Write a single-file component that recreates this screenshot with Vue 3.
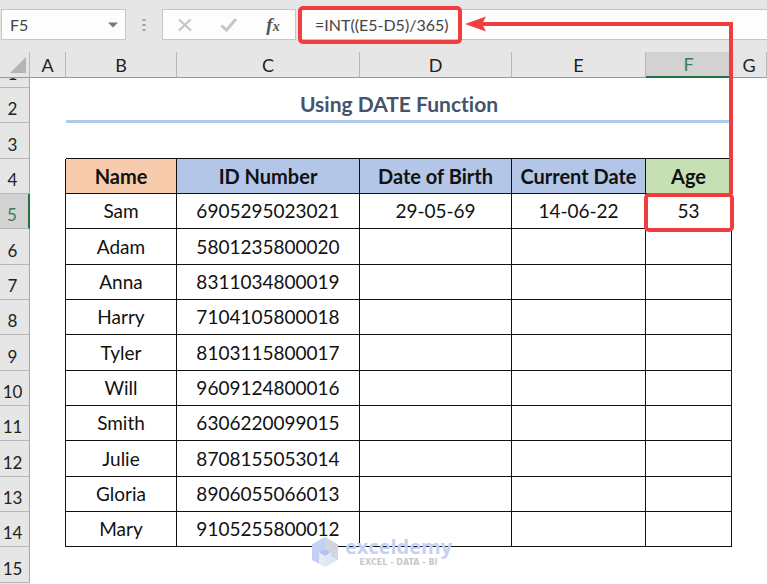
<template>
  <div class="excel">
    <div class="formula-bar">
      <div class="name-box">
        <input type="text" v-model="cellName" aria-label="Name box" />
        <button type="button" aria-label="Open name list">
          <svg width="10" height="6" viewBox="0 0 10 6"><path d="M0 0.5h10L5 5.5z" fill="#777" /></svg>
        </button>
      </div>
      <svg class="dots" width="4" height="14" viewBox="0 0 4 14">
        <path d="M0.5 1h3v2h-3zM0.5 6h3v2h-3zM0.5 11h3v2h-3z" fill="#a3a3a3" />
      </svg>
      <div class="tools">
        <button type="button" aria-label="Cancel">
          <svg width="16" height="16" viewBox="0 0 16 16">
            <path d="M2 2.5L14 13.5M13.5 2.5L2 13.5" stroke="#c6c6c6" stroke-width="2.2" fill="none" />
          </svg>
        </button>
        <button type="button" aria-label="Enter">
          <svg width="18" height="16" viewBox="0 0 18 16">
            <path d="M1.5 8.5L6.5 13L16 2" stroke="#c6c6c6" stroke-width="3" fill="none" />
          </svg>
        </button>
        <button type="button" class="fx" aria-label="Insert function">
          <span>f<sub>x</sub></span>
        </button>
      </div>
      <div class="formula">
        <input type="text" v-model="formula" aria-label="Formula" />
        <div class="formula-mark"></div>
        <div class="arrow-line"></div>
        <svg class="arrow-head" width="22" height="16" viewBox="0 0 22 16">
          <path d="M0 8L21 0.5L17 8L21 15.5z" fill="#f23d3f" />
        </svg>
      </div>
    </div>

    <table class="sheet">
      <colgroup>
        <col class="col-num" />
        <col v-for="c in columns" :key="c" :class="'col-' + c" />
      </colgroup>
      <thead>
        <tr>
          <th class="corner">
            <svg width="16" height="16" viewBox="0 0 16 16"><path d="M16 0v16H0z" fill="#b5b5b5" /></svg>
          </th>
          <th v-for="c in columns" :key="c" :class="{ active: c === 'F' }">{{ c }}</th>
        </tr>
      </thead>
      <tbody>
        <tr class="row-cut">
          <th><div class="cut"><span>1</span></div></th>
          <td colspan="7"></td>
        </tr>
        <tr>
          <th>2</th>
          <td></td>
          <td class="title" colspan="5">Using DATE Function</td>
          <td></td>
        </tr>
        <tr>
          <th>3</th>
          <td></td>
          <td v-for="n in 5" :key="n" class="top-line"></td>
          <td></td>
        </tr>
        <tr class="heads">
          <th>4</th>
          <td class="left-line"></td>
          <td class="cell peach">Name</td>
          <td class="cell blue">ID Number</td>
          <td class="cell blue">Date of Birth</td>
          <td class="cell blue">Current Date</td>
          <td class="cell green">Age</td>
          <td></td>
        </tr>
        <tr v-for="(p, index) in people" :key="p.id">
          <th :class="{ active: index === 0 }">{{ index + 5 }}</th>
          <td class="left-line"></td>
          <td class="cell">{{ p.name }}</td>
          <td class="cell">{{ p.id }}</td>
          <td class="cell">{{ p.birth }}</td>
          <td class="cell">{{ p.current }}</td>
          <td class="cell" :class="{ selected: index === 0 }">
            {{ p.age }}
            <template v-if="index === 0">
              <div class="up-line"></div>
              <div class="cell-mark"></div>
            </template>
          </td>
          <td></td>
        </tr>
        <tr>
          <th>15</th>
          <td colspan="7"></td>
        </tr>
      </tbody>
    </table>
    <div class="next-row"></div>

    <div class="watermark">
      <svg width="28" height="32" viewBox="0 0 28 32">
        <path d="M14 1L27 8.5V24L14 31L1 24V8.5z" fill="#dfe6f8" />
        <path d="M14 1V13L8 17V27.5L1 24V8.5z" fill="#c3d0f6" />
        <path d="M14 1L27 8.5V24L20 20V16L14 13z" fill="#d2d5db" />
        <path d="M14 13L20 16L14 20L8 16.5z" fill="#b3c4f3" />
        <path d="M8 16.5L14 20V31L8 27.5z" fill="#e8eaf0" />
      </svg>
      <div class="brand">
        <b>exceldemy</b>
        <span>EXCEL - DATA - BI</span>
      </div>
    </div>
  </div>
</template>

<script setup>
import { ref } from "vue";

const cellName = ref("F5");
const formula = ref("=INT((E5-D5)/365)");

const columns = ["A", "B", "C", "D", "E", "F", "G"];

const people = ref([
  { name: "Sam", id: "6905295023021", birth: "29-05-69", current: "14-06-22", age: "53" },
  { name: "Adam", id: "5801235800020" },
  { name: "Anna", id: "8311034800019" },
  { name: "Harry", id: "7104105800018" },
  { name: "Tyler", id: "8103115800017" },
  { name: "Will", id: "9609124800016" },
  { name: "Smith", id: "6306220099015" },
  { name: "Julie", id: "8708155053014" },
  { name: "Gloria", id: "8906055066013" },
  { name: "Mary", id: "9105255800012" },
]);
</script>

<style>
body {
  margin: 0;
}
</style>

<style scoped>
.excel {
  position: relative;
  display: flex;
  flex-direction: column;
  min-height: 100vh;
  background-color: #fff;
  font-family: Lato, "Liberation Sans", sans-serif;
  font-variant-ligatures: none;
  color: #111;
}

.formula-bar {
  display: flex;
  align-items: center;
  padding: 9px 0 12px 1px;
  background-color: #e6e6e6;
}

.name-box,
.tools,
.formula {
  display: flex;
  box-sizing: border-box;
  height: 31px;
  border: 1px solid #c6c6c6;
  background-color: #fdfdfd;
}

.name-box {
  width: 125px;
}

input {
  flex: 1;
  min-width: 0;
  padding: 0;
  border: none;
  outline: none;
  background: none;
  font-family: inherit;
  font-size: 16px;
  color: #444;
}

.name-box input {
  padding-left: 8px;
}

button {
  display: flex;
  align-items: center;
  justify-content: center;
  padding: 0;
  border: none;
  background: none;
  cursor: pointer;
}

.name-box button {
  width: 24px;
}

.dots {
  margin: 0 16px;
}

.tools {
  width: 134px;
}

.tools button {
  flex: 1;
}

.tools .fx {
  font-family: "Liberation Serif", serif;
  font-size: 19px;
  line-height: 20px;
  font-style: italic;
  font-weight: bold;
  color: #555;
}

.fx sub {
  font-size: 14px;
  line-height: 10px;
  vertical-align: baseline;
}

.formula {
  position: relative;
  flex: 1;
  margin-left: 2px;
  border-right: none;
}

.formula input {
  padding-left: 16px;
}

/* red callouts */
.formula-mark,
.cell-mark {
  position: absolute;
  box-sizing: border-box;
  border: 4px solid #f23d3f;
  border-radius: 5px;
  pointer-events: none;
}

.formula-mark {
  top: -4px;
  left: -1px;
  width: 164px;
  height: 38px;
}

.arrow-line {
  position: absolute;
  top: 12px;
  left: 182px;
  right: 34px;
  height: 4px;
  background-color: #f23d3f;
}

.arrow-head {
  position: absolute;
  top: 6px;
  left: 166px;
}

.cell-mark {
  top: -1px;
  left: -2px;
  right: -3px;
  bottom: -4px;
}

.up-line {
  position: absolute;
  right: -2px;
  bottom: 100%;
  width: 4px;
  height: 172px;
  background-color: #f23d3f;
}

.sheet {
  flex: 1;
  width: 100%;
  height: calc(100vh - 53px);
  border-collapse: separate;
  border-spacing: 0;
  table-layout: fixed;
}

.next-row {
  width: 30px;
  height: 1px;
  background-color: #e6e6e6;
}

.col-num { width: 30px; }
.col-A { width: 36px; }
.col-B { width: 111px; }
.col-C { width: 183px; }
.col-D { width: 152px; }
.col-E { width: 134px; }
.col-F { width: 86px; }
.col-G { width: 35px; }

th,
td {
  box-sizing: border-box;
  padding: 0;
  text-align: center;
  line-height: 22px;
}

th {
  background-color: #e6e6e6;
  font-weight: normal;
  font-size: 18px;
  color: #222;
}

thead th {
  height: 26px;
  border-right: 1px solid #b8b8b8;
  border-bottom: 1px solid #999;
}

thead th.active {
  border-bottom: 2px solid #217346;
  background-color: #d2d2d2;
  color: #3d7a5a;
}

.corner svg {
  display: block;
  margin-left: 10px;
}

tbody th {
  padding-top: 8px;
  padding-right: 4px;
  border-right: 1px solid #a6a6a6;
  border-bottom: 1px solid #b8b8b8;
  font-size: 17px;
}

tbody th.active {
  border-right: 2px solid #217346;
  background-color: #d2d2d2;
  color: #3d7a5a;
}

.row-cut,
.row-cut th {
  height: 10px;
  padding-top: 0;
}

.cut {
  display: flex;
  align-items: flex-end;
  justify-content: center;
  height: 9px;
  overflow: hidden;
}

.cut span {
  margin-bottom: 2px;
  line-height: 22px;
}

td {
  font-size: 19px;
}

.title {
  border-bottom: 3px solid #aecbea;
  font-size: 21px;
  font-weight: bold;
  color: #44546a;
}

.top-line {
  border-bottom: 1px solid #111;
}

.left-line {
  border-right: 1px solid #111;
}

.cell {
  border-right: 1px solid #111;
  border-bottom: 1px solid #111;
}

.heads .cell {
  font-size: 20px;
  font-weight: bold;
}

.peach { background-color: #f8cbad; }
.blue { background-color: #b4c6e7; }
.green { background-color: #c6e0b4; }

.selected {
  position: relative;
}

.watermark {
  position: absolute;
  left: 311px;
  bottom: 16px;
  display: flex;
  align-items: center;
  gap: 6px;
  pointer-events: none;
}

.brand {
  display: flex;
  flex-direction: column;
  align-items: center;
  font-family: "Open Sans", sans-serif;
}

.brand b {
  font-size: 20px;
  line-height: 22px;
  color: #c5d1f4;
}

.brand span {
  font-family: "DejaVu Sans", sans-serif;
  font-size: 8px;
  font-weight: bold;
  line-height: 10px;
  color: #c4c8d0;
}
</style>
